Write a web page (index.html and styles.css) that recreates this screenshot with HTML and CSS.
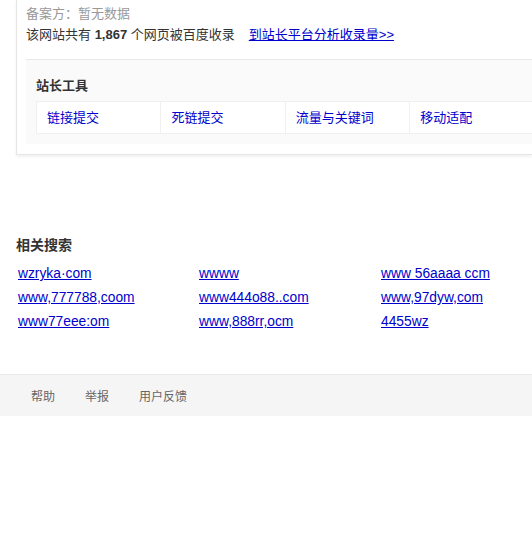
FILE: index.html
```html
<!DOCTYPE html>
<html lang="zh-CN">
<head>
<meta charset="utf-8">
<title>站长工具</title>
<link rel="stylesheet" href="styles.css">
</head>
<body>
<div class="card">
  <div class="info">
    <div class="beian">备案方：暂无数据</div>
    <div class="count">该网站共有 <b>1,867</b> 个网页被百度收录<a class="plat" href="#">到站长平台分析收录量&gt;&gt;</a></div>
  </div>
  <div class="tools">
    <div class="tools-title">站长工具</div>
    <div class="tool-row">
      <a class="tool" href="#">链接提交</a>
      <a class="tool" href="#">死链提交</a>
      <a class="tool" href="#">流量与关键词</a>
      <a class="tool" href="#">移动适配</a>
    </div>
  </div>
</div>

<div class="related">
  <div class="related-title">相关搜索</div>
  <div class="related-grid">
    <a href="#">wzryka·com</a>
    <a href="#">wwww</a>
    <a href="#">www 56aaaa ccm</a>
    <a href="#">www,777788,coom</a>
    <a href="#">www444o88..com</a>
    <a href="#">www,97dyw,com</a>
    <a href="#">www77eee:om</a>
    <a href="#">www,888rr,ocm</a>
    <a href="#">4455wz</a>
  </div>
</div>

<div class="footer">
  <a href="#">帮助</a>
  <a href="#">举报</a>
  <a href="#">用户反馈</a>
</div>
</body>
</html>
```
FILE: styles.css
```css
html, body {
  margin: 0;
  padding: 0;
  overflow: hidden;
  background: #fff;
}
body {
  font-family: "Liberation Sans", Arial, "Noto Sans CJK SC", sans-serif;
  font-size: 13px;
  color: #333;
  width: 532px;
}
a { color: #00c; }

.card {
  margin-left: 16px;
  border-left: 1px solid #e6e6e6;
  border-bottom: 1px solid #e6e6e6;
  box-shadow: 0 2px 3px rgba(0,0,0,0.06);
  padding: 3px 0 10px 9px;
}
.info {
  line-height: 21px;
}
.beian { color: #999; }
.count b { font-weight: bold; }
.plat {
  margin-left: 14px;
  color: #00c;
  text-decoration: underline;
}
.tools {
  margin-top: 14px;
  border-top: 1px solid #e8e8e8;
  background: #fafafa;
  padding: 16px 0 10px 10px;
  overflow: hidden;
}
.tools-title {
  font-weight: bold;
  font-size: 13px;
  line-height: 20px;
  color: #333;
}
.tool-row {
  margin-top: 5px;
  display: grid;
  grid-template-columns: repeat(4, 124.4px);
  background: #fff;
  border-top: 1px solid #f0f0f0;
  border-bottom: 1px solid #f0f0f0;
  width: max-content;
}
.tool {
  display: block;
  border-left: 1px solid #f0f0f0;
  padding: 0 10px;
  line-height: 31px;
  height: 31px;
  color: #00c;
  text-decoration: none;
  font-size: 13px;
}

.related {
  margin-top: 80px;
  padding-left: 16px;
}
.related-title {
  font-weight: bold;
  font-size: 14px;
  line-height: 20px;
  color: #333;
}
.related-grid {
  margin-top: 7px;
  display: grid;
  grid-template-columns: 181px 182px 150px;
}
.related-grid a {
  margin-left: 2px;
  font-size: 13.8px;
  line-height: 24px;
  color: #00c;
  text-decoration: underline;
  justify-self: start;
}

.footer {
  margin-top: 40px;
  border-top: 1px solid #e8e8e8;
  background: #f5f5f5;
  height: 41px;
  display: flex;
  align-items: center;
  padding-left: 31px;
  gap: 30px;
}
.footer a {
  color: #666;
  font-size: 12px;
  text-decoration: none;
}
```
